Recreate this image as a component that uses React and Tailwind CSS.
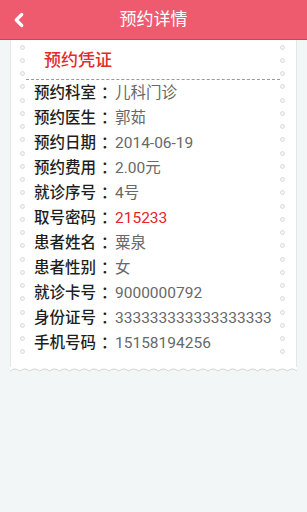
import { ChevronLeft } from 'lucide-react';

const rows = [
    { label: '预约科室', value: '儿科门诊' },
    { label: '预约医生', value: '郭茹' },
    { label: '预约日期', value: '2014-06-19' },
    { label: '预约费用', value: '2.00元' },
    { label: '就诊序号', value: '4号' },
    { label: '取号密码', value: '215233', red: true },
    { label: '患者姓名', value: '粟泉' },
    { label: '患者性别', value: '女' },
    { label: '就诊卡号', value: '9000000792' },
    { label: '身份证号', value: '333333333333333333' },
    { label: '手机号码', value: '15158194256' },
];

const holes = Array.from({ length: 24 });

function Holes() {
    return (
        <div className="flex w-[5px] shrink-0 flex-col gap-[8.25px] pt-[4.5px]">
            {holes.map((_, i) => (
                <span key={i} className="block h-[5px] w-[5px] rounded-full border border-[#dcdcdc] bg-[#f4f4f4]" />
            ))}
        </div>
    );
}

function Wave({ width = 287, count = 29 }) {
    const step = width / count;
    let line = 'M0,4';
    for (let i = 0; i < count; i++) {
        line += ` q${(step / 2).toFixed(2)},-4 ${step.toFixed(2)},0`;
    }
    return (
        <svg width={width} height="6" viewBox={`0 0 ${width} 6`} className="block">
            <path d={`${line} V0 H0 Z`} fill="#ffffff" />
            <path d={line} fill="none" stroke="#d4d4d4" strokeWidth="1" />
        </svg>
    );
}

export default function App() {
    return (
        <div className="h-[512px] w-[307px] overflow-hidden bg-[#f3f6f6]" style={{ fontFamily: 'Roboto, "Noto Sans CJK SC", sans-serif' }}>
            <header className="relative flex h-[40px] items-center justify-center border-b border-[#cf4257] bg-[#ee5a6e]">
                <ChevronLeft className="absolute left-[8px] top-[9px] h-[22px] w-[22px] text-white" strokeWidth={3.5} />
                <h1 className="text-[17px] leading-none text-white">预约详情</h1>
            </header>

            <div className="ml-[10px] w-[287px]">
                <div className="flex border-x border-[#e6e6e6] bg-white pb-[10px] pl-[9px] pr-[11px]">
                    <Holes />
                    <div className="ml-[1px] min-w-0 flex-1">
                        <p className="pl-[18px] pt-[8px] text-[17px] font-medium leading-[24px] text-[#e52a2a]">预约凭证</p>
                        <div className="mt-[7px] border-t border-dashed border-[#9a9a9a]" />
                        <div className="pt-[1.5px]">
                            {rows.map((row) => (
                                <div key={row.label} className="flex h-[25px] items-center pl-[8px] text-[15.5px] whitespace-nowrap">
                                    <span className="w-[62px] shrink-0 font-medium text-[#1e1e1e]">{row.label}</span>
                                    <span className="ml-[5px] mr-[-1.5px] shrink-0 font-medium text-[#1e1e1e]">：</span>
                                    <span className={row.red ? 'text-[#e8212a]' : 'text-[#686868]'}>{row.value}</span>
                                </div>
                            ))}
                        </div>
                    </div>
                    <Holes />
                </div>
                <Wave />
            </div>
        </div>
    );
}
